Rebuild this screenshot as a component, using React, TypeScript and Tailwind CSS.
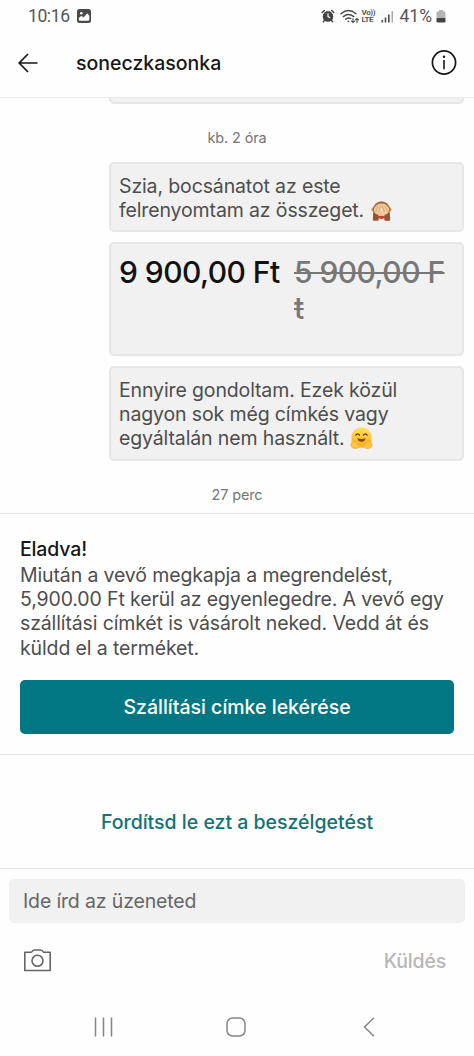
import React from "react";

function AlarmIcon() {
  return (
    <svg width="14" height="14" viewBox="0 0 14 14" fill="none">
      <circle cx="7" cy="7.400" r="5.300" fill="#444" />
      <path d="M1.200 3.500 3.300 1.500M12.800 3.500 10.700 1.500M3.400 11.300 2.400 12.800M10.600 11.300 11.600 12.800" stroke="#444" strokeWidth="1.500" strokeLinecap="round" />
      <path d="M7 4.300V7.600L9.200 8.800" stroke="#fff" strokeWidth="1.200" />
    </svg>
  );
}

function WifiIcon() {
  return (
    <svg width="20" height="15" viewBox="0 0 20 15" fill="none" stroke="#4a4a4a" strokeWidth="1.400" strokeLinecap="round">
      <path d="M1 4.700Q8.500-1.700 16 4.700M3.300 7.600Q8.500 3.200 13.700 7.600M5.700 10.200Q8.500 8 10.600 9.600" />
      <circle cx="8.400" cy="12.300" r=".9" fill="#4a4a4a" stroke="none" />
      <path d="M13 9.500v4m-1.500-1.300L13 13.600l1.500-1.400M17 13.600v-4m-1.500 1.300L17 9.500l1.500 1.400" strokeWidth="1.100" />
    </svg>
  );
}

function SignalIcon() {
  return (
    <svg width="13" height="13" viewBox="0 0 13 13">
      <path d="M.5 10h1.600v2.500H.5zM3.700 7.500h1.600v5H3.700zM7 4.500h1.600v8H7z" fill="#4a4a4a" />
      <path d="M10.500 1h1.500v11.500h-1.500z" fill="#aaa" />
    </svg>
  );
}

function BatteryIcon() {
  return (
    <svg width="10" height="15" viewBox="0 0 10 15">
      <path d="M3 1h4v1.500h1.200Q9.500 2.500 9.500 3.800V9H.5V3.800Q.5 2.500 1.800 2.500H3z" fill="#b4b4b4" />
      <path d="M.5 9h9v3.200q0 1.300-1.300 1.300H1.800Q.5 13.500.5 12.200z" fill="#444" />
    </svg>
  );
}

function PictureIcon() {
  return (
    <svg width="14" height="14" viewBox="0 0 14 14">
      <rect width="14" height="14" rx="2.500" fill="#4a4a4a" />
      <circle cx="4.300" cy="4.300" r="1.300" fill="#fff" />
      <path d="M1.800 9 4.500 6.800l2 1.700L10.300 4.300l2 2.500V10.500q0 1.300-1.300 1.300H3.100q-1.300 0-1.300-1.300z" fill="#fff" />
    </svg>
  );
}

function MonkeyEmoji() {
  return (
    <svg className="ml-[2px] inline-block align-[-4px]" width="21" height="20" viewBox="0 0 21 20">
      <circle cx="2.600" cy="8.500" r="2.300" fill="#d99a62" />
      <circle cx="18.400" cy="8.500" r="2.300" fill="#d99a62" />
      <ellipse cx="10.500" cy="9" rx="8.500" ry="8.700" fill="#a8683c" />
      <ellipse cx="10.500" cy="9" rx="7.500" ry="6.500" fill="#efca9c" />
      <path d="M7.300 15.600q3.200-1.800 6.400 0-.5 2.300-3.200 2.300t-3.200-2.300z" fill="#d8392b" />
      <path d="M10 4.500 7.500 11M11 4.500l2.500 6.500M7 5 4.800 10.500M14 5l2.200 5.500" stroke="#c79366" strokeWidth=".6" fill="none" />
      <path d="M9.600 7.600h1.800l-.9 2.400z" fill="#fff0d3" />
      <path d="M2.200 11.500q2.300 2.300 5.100 2l.5 5.700q-3 1.200-6 .2zM18.800 11.500q-2.300 2.300-5.100 2l-.5 5.700q3 1.200 6 .2z" fill="#965530" />
    </svg>
  );
}

function HugEmoji() {
  return (
    <svg className="inline-block align-[-4px]" width="23" height="22" viewBox="0 0 23 22">
      <defs>
        <linearGradient id="face" x1="0" y1="0" x2="0" y2="1">
          <stop stopColor="#ffe25a" />
          <stop offset="1" stopColor="#f9ac23" />
        </linearGradient>
      </defs>
      <circle cx="11.500" cy="10.500" r="10.200" fill="url(#face)" />
      <path d="M5.800 8.200q1.900-2.800 3.800 0M13.400 8.200q1.900-2.800 3.800 0" fill="none" stroke="#653710" strokeWidth="1.200" strokeLinecap="round" />
      <path d="M7.300 11.300q4.200 1.300 8.400 0-.8 3.500-4.200 3.500t-4.200-3.500z" fill="#8b430f" />
      <g fill="#ffc53c" stroke="#eda022" strokeWidth=".6" strokeLinejoin="round">
        <path d="M2 15.200q-.8-2 .4-2.200 1.100-.1 1.700 2.200.7-2 1.900-1.400.7.400.2 2.300 1.600-1.300 2.400-.3.500.8-.8 2.200 1.600-.4 1.800.7 0 2.200-3.700 2.800-4 .2-5-2.700-.2-2 1.100-3.600z" />
        <path d="M21 15.200q.8-2-.4-2.200-1.100-.1-1.700 2.200-.7-2-1.900-1.400-.7.400-.2 2.300-1.600-1.300-2.400-.3-.5.800.8 2.200-1.600-.4-1.800.7 0 2.200 3.700 2.800 4 .2 5-2.700.2-2-1.100-3.600z" />
      </g>
    </svg>
  );
}

function StatusBar() {
  return (
    <div className="flex h-8 shrink-0 items-center justify-between px-[28px] text-[#555]">
      <div className="flex items-center">
        <span className="w-[49px] pt-px font-['Roboto'] text-[17.500px] leading-none tracking-[-0.400px]">10:16</span>
        <PictureIcon />
      </div>
      <div className="flex items-center">
        <AlarmIcon />
        <span className="ml-[5px]"><WifiIcon /></span>
        <span className="ml-[2px] flex w-[15px] flex-col font-['Roboto'] text-[8px] leading-[7px] font-bold tracking-[-0.400px]">
          <span>Vo))</span>
          <span>LTE</span>
        </span>
        <span className="ml-[4px]"><SignalIcon /></span>
        <span className="ml-[6px] pt-px font-['Roboto'] text-[17.500px] leading-none">41%</span>
        <span className="ml-[4px]"><BatteryIcon /></span>
      </div>
    </div>
  );
}

function Header() {
  return (
    <header className="flex h-[66px] shrink-0 items-center border-b border-[#eaeaea] pr-[17px] pb-[3px] pl-[18px]">
      <svg width="20" height="20" viewBox="0 0 20 20" fill="none" stroke="#171717" strokeWidth="1.700">
        <path d="M19.500 10H1.500M10 1 1.200 10 10 19" />
      </svg>
      <h1 className="ml-[38px] flex-1 text-[19.500px] leading-6 font-medium text-[#171717]">soneczkasonka</h1>
      <svg width="26" height="26" viewBox="0 0 26 26" fill="none" stroke="#171717">
        <circle cx="13" cy="12.500" r="11.600" strokeWidth="1.700" />
        <path d="M13 10v9.300" strokeWidth="1.600" />
        <circle cx="13" cy="6.700" r="1.200" fill="#171717" stroke="none" />
      </svg>
    </header>
  );
}

const bubble = "ml-[109px] mr-[10px] rounded-[5px] border-2 border-[#e6e6e6] bg-[#f1f1f1] px-[8px]";
const bodyText = "text-[19.500px] leading-[24.200px] tracking-[-0.130px]";

export default function App() {
  return (
    <div className="flex h-[1056px] w-[474px] flex-col overflow-hidden bg-[#fefefe] font-['Inter','Noto_Sans',sans-serif] text-[#4d4d4d]">
      <StatusBar />
      <Header />
      <main className="flex h-[415px] shrink-0 flex-col">
        <div className="mr-[10px] ml-[109px] h-[6px] shrink-0 rounded-b-[5px] border-2 border-t-0 border-[#e6e6e6] bg-[#f1f1f1]" />
        <p className="mt-[24px] text-center text-[14.500px] leading-5 tracking-[-0.150px] text-[#757575]">kb. 2 óra</p>
        <div className={`${bubble} ${bodyText} mt-[14px] h-[70px] shrink-0 pt-[10px]`}>
          Szia, bocsánatot az este
          <br />
          felrenyomtam az összeget. <MonkeyEmoji />
        </div>
        <div className={`${bubble} mt-[10px] flex h-[114px] shrink-0 pt-[10px] text-[30px] leading-[36px] font-medium tracking-[-0.550px]`}>
          <span className="w-[175px] shrink-0 whitespace-nowrap text-[#111]">9 900,00 Ft</span>
          <span className="whitespace-nowrap text-[#777] line-through decoration-2">
            5 900,00 F
            <br />t
          </span>
        </div>
        <div className={`${bubble} ${bodyText} mt-[10px] h-[95px] shrink-0 pt-[10px]`}>
          Ennyire gondoltam. Ezek közül
          <br />
          nagyon sok még címkés vagy
          <br />
          egyáltalán nem használt. <HugEmoji />
        </div>
        <p className="mt-[24px] text-center text-[14.500px] leading-5 tracking-[-0.150px] text-[#757575]">27 perc</p>
      </main>
      <section className="flex h-[242px] shrink-0 flex-col border-y border-[#e7e7e7] px-[20px] pt-[22px]">
        <h2 className="text-[19.500px] leading-[26px] font-medium tracking-[-0.150px] text-[#171717]">Eladva!</h2>
        <p className={`${bodyText} mt-px whitespace-nowrap`}>
          Miután a vevő megkapja a megrendelést,
          <br />
          5,900.00 Ft kerül az egyenlegedre. A vevő egy
          <br />
          szállítási címkét is vásárolt neked. Vedd át és
          <br />
          küldd el a terméket.
        </p>
        <button className="mt-[20px] h-[54px] shrink-0 rounded-[5px] bg-[#007782] pt-[2px] text-[19.500px] font-medium text-white">Szállítási címke lekérése</button>
      </section>
      <button className="h-[113px] shrink-0 pt-[22px] text-[19.500px] font-medium text-[#127277]">Fordítsd le ezt a beszélgetést</button>
      <footer className="flex flex-1 flex-col border-t border-[#e7e7e7] pt-[10px]">
        <div className="mr-[9px] ml-[9px] flex h-[44px] items-center rounded-[5px] bg-[#f1f1f1] pt-[2px] pl-[14px] text-[19.500px] tracking-[-0.150px] text-[#666]">Ide írd az üzeneted</div>
        <div className="flex h-[75px] items-center justify-between pr-[28px] pl-[23px]">
          <svg width="29" height="24" viewBox="0 0 29 24" fill="none" stroke="#666" strokeWidth="1.600">
            <path d="M1.800 3.300H8.500Q9.500 1 11.500 1h6Q19.500 1 20.500 3.300h6.700v18.200H1.800z" strokeLinejoin="round" />
            <circle cx="14.500" cy="11.700" r="5.500" />
          </svg>
          <span className="pt-[2px] text-[19.500px] font-medium tracking-[-0.200px] text-[#b7b7b7]">Küldés</span>
        </div>
        <nav className="flex h-[58px] items-center pl-[94px]">
          <svg width="20" height="20" viewBox="0 0 20 20" stroke="#858585" strokeWidth="1.500"><path d="M1.500 .5v19M9.500 .5v19M17.500 .5v19" /></svg>
          <svg className="ml-[112px]" width="20" height="20" viewBox="0 0 20 20" fill="none" stroke="#858585" strokeWidth="1.500"><rect x="1" y="1" width="18" height="18" rx="5.500" /></svg>
          <svg className="ml-[117px]" width="12" height="20" viewBox="0 0 12 20" fill="none" stroke="#858585" strokeWidth="1.500"><path d="M11 .8 1.500 10l9.500 9.200" /></svg>
        </nav>
      </footer>
    </div>
  );
}
